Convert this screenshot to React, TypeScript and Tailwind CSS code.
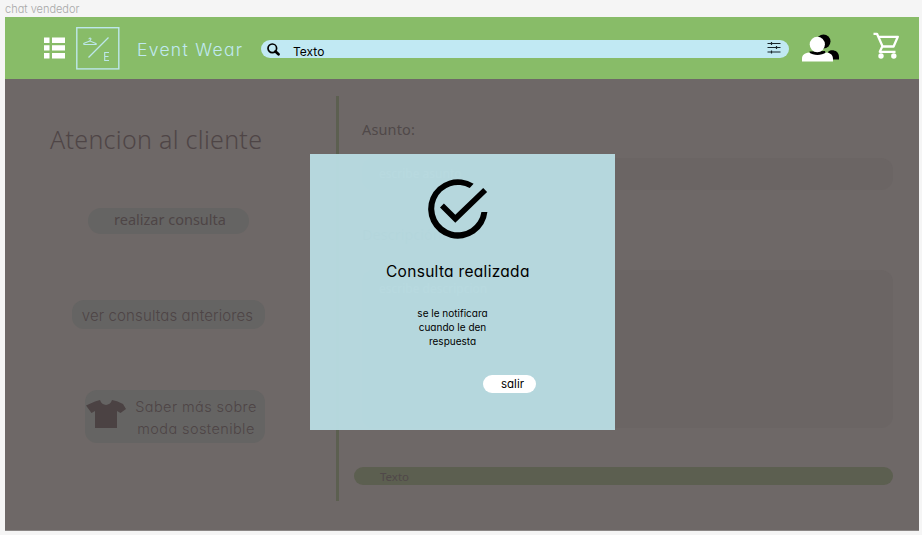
import React from "react";

const geo = "font-['Inter','Noto_Sans',sans-serif] [font-feature-settings:'cv11']";
const noto = "font-['Noto_Sans',sans-serif]";

function ListIcon() {
  return (
    <svg className="ml-[39px] h-[22px] w-[21px] shrink-0" viewBox="0 0 21 22" fill="#fff">
      <path d="M0 .5h5.5V6H0zM8 .5h13V6H8zM0 8.300h5.500v5.200H0zM8 8.300h13v5.200H8zM0 16h5.500v5.500H0zM8 16h13v5.500H8z" />
    </svg>
  );
}

function Logo() {
  return (
    <svg className="ml-[11px] h-[44px] w-[44px] shrink-0" viewBox="0 0 44 44" fill="none" stroke="#bde7ea">
      <rect x=".8" y="1.700" width="42" height="41.200" strokeWidth="1.400" />
      <path d="M12.500 31.500 32.500 11.500" strokeWidth="1.200" />
      <path d="M13 13.200c0-1.700 2.200-1.500 1.900-.1-.2.800-1 .8-1 1.800l6 2.500c.8.500.4 1.100-.5 1.100H8.500c-1 0-1.200-.7-.4-1.200l5.800-2.400" strokeWidth="1.100" />
      <path d="M33 26.500h-4.300v8H33M28.700 30.500h3.800" strokeWidth="1.100" />
    </svg>
  );
}

function Header() {
  return (
    <header className="flex h-[62px] shrink-0 items-center bg-[#88bc68]">
      <ListIcon />
      <Logo />
      <span className="ml-[17px] mt-[3px] w-[124px] whitespace-nowrap font-['Inter',sans-serif] text-[17.500px] font-light leading-6 tracking-[1.300px] text-[#c0e9f0] [font-feature-settings:'cv11']">
        Event Wear
      </span>
      <div className="mt-[2px] flex h-[18px] w-[528px] shrink-0 items-center rounded-full bg-[#c1e9f3]">
        <svg className="ml-[6px] h-[13px] w-[13px]" viewBox="0 0 13 13" fill="none" stroke="#000">
          <circle cx="5.300" cy="5.300" r="4.300" strokeWidth="1.700" />
          <path d="m8.500 8.500 3 2.800" strokeWidth="2.700" strokeLinecap="round" />
        </svg>
        <span className={`${geo} ml-[13px] mt-[5px] text-[12px] leading-[14px] text-black`}>Texto</span>
        <svg className="-mt-[3px] ml-auto mr-[8px] h-[13px] w-[14px]" viewBox="0 0 14 13" stroke="#17252a" strokeWidth="1.200">
          <path d="M.5 2.500h13M.5 6.500h13M.5 11h13M4.500 1v3M9.500 5v3M4.500 9.500v3" />
        </svg>
      </div>
      <svg className="ml-[13px] h-[28px] w-[38px] shrink-0" viewBox="0 0 38 28">
        <circle cx="21.500" cy="7.500" r="7" />
        <path d="M26 18c2-3 11-2.500 11 5v2.500h-8z" />
        <path d="M7.500 17.500 23 17l1 4H8.500z" />
        <ellipse cx="15.300" cy="10.500" rx="7.600" ry="7.800" fill="#fff" />
        <path d="M0 27.500V25c0-4 2.500-6 7-6.500 4.500 3.300 12.500 3.300 17 0 4.500.3 7 2.500 7 6.500v2.500z" fill="#fff" />
      </svg>
      <svg className="-mt-[5px] ml-[33px] h-[28px] w-[28px] shrink-0" viewBox="0 0 28 28" fill="none" stroke="#fff" strokeWidth="2.300">
        <path d="M.5 1.800h3.500L9.600 14.500h11L24.800 4.800H5.300M9.400 14.300 6.800 19.800h15.700" strokeLinejoin="round" />
        <circle cx="8" cy="24" r="2.700" fill="#fff" stroke="none" />
        <circle cx="20.800" cy="24" r="2.700" fill="#fff" stroke="none" />
      </svg>
    </header>
  );
}

function Sidebar() {
  return (
    <aside className="flex w-[331px] shrink-0 flex-col items-start text-[#4e4546]">
      <h1 className={`${noto} ml-[45px] mt-[42px] whitespace-nowrap text-[25px] font-light leading-[36px] tracking-[0.300px]`}>
        Atencion al cliente
      </h1>
      <button className={`${noto} ml-[83px] mt-[51px] h-[26px] w-[161px] whitespace-nowrap rounded-full bg-[#656463] pb-[3px] pl-[3px] text-[14.500px] leading-[23px]`}>
        realizar consulta
      </button>
      <button className={`${geo} ml-[67px] mt-[66px] h-[29px] w-[193px] whitespace-nowrap rounded-[12px] bg-[#656463] pr-[2px] pt-[2px] text-[15px] font-light leading-6 tracking-[0.120px]`}>
        ver consultas anteriores
      </button>
      <button className={`${geo} ml-[80px] mt-[61px] flex h-[53px] w-[180px] items-center rounded-[12px] bg-[#656463] pt-[2px] text-[14.500px] font-light leading-[21.500px] tracking-[0.400px]`}>
        <svg className="-mt-[7px] ml-[1px] h-[28px] w-[40px] shrink-0" viewBox="0 0 40 28" fill="#4b4243">
          <path d="M9 1.500 14 0c2 6.500 10 6.500 12 0l5 1.200L37 4l3 5-5.500 4-3.500-2v17H9V11l-3.500 2L0 5.500z" />
        </svg>
        <span className="ml-[8px] w-[124px] whitespace-nowrap text-center">
          Saber más sobre
          <br />
          moda sostenible
        </span>
      </button>
    </aside>
  );
}

function QueryForm() {
  return (
    <section className="flex flex-1 flex-col pl-[15px] pr-[26px] text-[#504849]">
      <label className={`${noto} ml-[8px] mt-[38px] text-[14.500px] leading-6 tracking-[0.150px]`}>Asunto:</label>
      <div className={`${noto} ml-[8px] mt-[17px] h-[32px] rounded-[12px] bg-[#6b6564] pl-[17px] text-[12px] leading-[32px] text-[#949090]`}>
        escribe asunto
      </div>
      <label className={`${noto} ml-[8px] mt-[32px] text-[14.500px] leading-6`}>Descripción:</label>
      <div className={`${noto} ml-[8px] mt-[24px] h-[158px] rounded-[12px] bg-[#6b6564] pl-[17px] pt-[9px] text-[12px] leading-5 text-[#949090]`}>
        escribe descripcion
      </div>
      <div className={`${noto} mt-[39px] h-[18px] rounded-full bg-[#5c5f50] pl-[26px] text-[11.500px] leading-[20px]`}>
        Texto
      </div>
    </section>
  );
}

function Dialog() {
  return (
    <div role="dialog" className={`${geo} absolute left-[310px] top-[154px] flex h-[276px] w-[305px] flex-col bg-[#b9dde4]/95 text-black`}>
      <svg className="ml-[112px] mt-[19px] h-[72px] w-[72px]" viewBox="0 0 24 24">
        <path d="M21.800 13A9.900 9.900 0 1 1 17.200 3.600L15.900 5A7.900 7.900 0 1 0 19.800 13zM7.300 10.200 6 11.500 11.100 16.600 21.700 6.300 20.400 5 11.100 13.900z" />
      </svg>
      <h2 className="ml-[76px] mt-[15px] whitespace-nowrap text-[15.500px] leading-6 tracking-[0.300px]">Consulta realizada</h2>
      <p className="ml-[98px] mt-[22px] w-[89px] text-center text-[10px] leading-[14.200px]">
        se le notificara
        <br />
        cuando le den
        <br />
        respuesta
      </p>
      <button className="ml-[173px] mt-[26px] h-[18px] w-[53px] rounded-full bg-white pl-[6px] text-[11.500px] leading-[18px]">
        salir
      </button>
    </div>
  );
}

export default function App() {
  return (
    <div className="relative flex h-[535px] w-[922px] flex-col overflow-hidden bg-[#f5f5f5] pl-[5px] pr-[3px]">
      <div className="h-[17px] font-['Inter',sans-serif] text-[11px] font-light leading-[18px] text-[#a8a8a8] [font-feature-settings:'cv11']">
        chat vendedor
      </div>
      <Header />
      <main className="flex h-[452px] border-b border-[#8b8786] bg-[#6e6867]">
        <Sidebar />
        <div className="mt-[17px] h-[405px] w-[3px] shrink-0 bg-[#5c5f50]" />
        <QueryForm />
      </main>
      <Dialog />
    </div>
  );
}
